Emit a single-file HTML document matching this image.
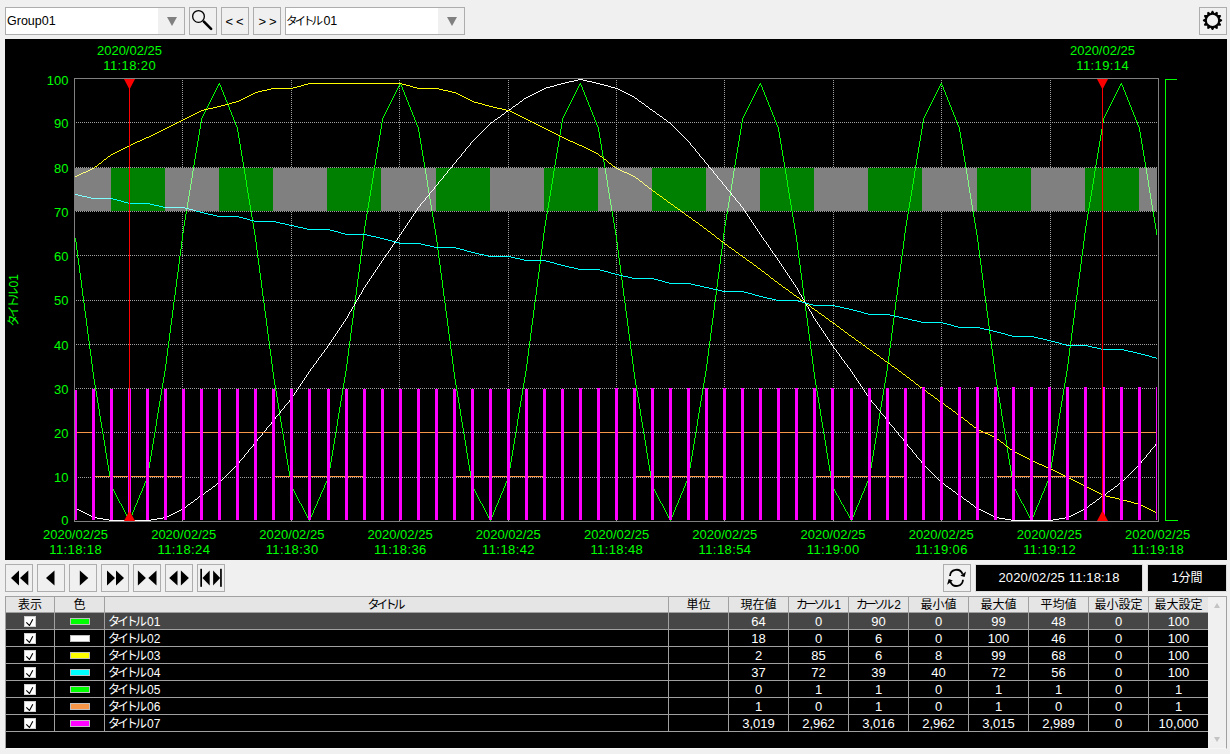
<!DOCTYPE html>
<html lang="ja">
<head>
<meta charset="utf-8">
<title>Trend</title>
<style>
html,body{margin:0;padding:0;}
body{width:1230px;height:754px;background:#f0f0f0;position:relative;overflow:hidden;
 font-family:"Liberation Sans","Noto Sans CJK JP",sans-serif;font-size:13px;color:#000;}
.abs{position:absolute;box-sizing:border-box;}
.btn{position:absolute;box-sizing:border-box;width:28px;height:28px;border:1px solid #adadad;background:#f0f0f0;
 display:flex;align-items:center;justify-content:center;}
.combo{position:absolute;box-sizing:border-box;height:28px;width:180px;border:1px solid #adadad;background:#fff;top:7px;}
.combo .txt{position:absolute;left:1px;top:0;line-height:26px;font-size:12.5px;white-space:nowrap;}
.combo .dd{position:absolute;right:0;top:0;width:26px;height:26px;background:#f0f0f0;}
.combo .dd:after{content:"";position:absolute;left:8.5px;top:9px;border-left:5.2px solid transparent;border-right:5.2px solid transparent;border-top:9px solid #808080;}
.jp{font-size:12px;letter-spacing:-3px;margin-right:3px;}
.th .jp{letter-spacing:-3.3px;margin-right:3.3px;}
.jpc{font-size:11.5px;letter-spacing:-3px;margin-right:3.4px;margin-left:-1px;}
.dg{font-size:12px;}
#chart{position:absolute;left:5px;top:39px;}
.blk{position:absolute;box-sizing:border-box;background:#000;color:#fff;height:28px;top:564px;text-align:center;line-height:26px;font-size:13px;border:1px solid #dcdcdc;}
#tbl{position:absolute;left:5px;top:596px;width:1222px;height:153px;background:#000;box-sizing:border-box;border:1px solid #a0a0a0;border-bottom-color:#f6f6f6;overflow:hidden;}
.tr{position:relative;height:17px;display:flex;}
.tr.th{height:16px;}
.c{box-sizing:border-box;height:17px;border-right:1px solid #a0a0a0;border-bottom:1px solid #a0a0a0;color:#fff;text-align:center;line-height:18px;font-size:13px;white-space:nowrap;overflow:hidden;flex:none;}
.th .c{background:#e5e5e5;color:#000;height:16px;line-height:17px;font-size:12px;}
.sel .c{background:#464646;}
.c0{width:49px;}
.c1{width:50px;}
.c2{width:564px;text-align:left;padding-left:3px;}
.th .c2{text-align:center;padding-left:0;}
.c3,.c4,.c5,.c6,.c7,.c8,.c9,.c10,.c11{width:60px;}
.cb{display:inline-block;box-sizing:border-box;width:12px;height:11px;background:#fff;border:1px solid #d0d0d0;vertical-align:top;margin-top:3px;position:relative;}
.cb svg{position:absolute;left:0;top:0;}
.sw{display:inline-block;box-sizing:border-box;width:20px;height:7px;border:1px solid #c0c0c0;vertical-align:top;margin-top:5px;}
#sb{position:absolute;right:0;top:0;width:18px;height:151px;background:#f0f0f0;}
#sb .up{position:absolute;left:5.5px;top:6px;border-left:3.5px solid transparent;border-right:3.5px solid transparent;border-bottom:5px solid #c3c3c3;}
#sb .dn{position:absolute;left:5.5px;bottom:6px;border-left:3.5px solid transparent;border-right:3.5px solid transparent;border-top:5px solid #c3c3c3;}
</style>
</head>
<body>
<div class="combo" style="left:5px"><span class="txt">Group01</span><span class="dd"></span></div>
<div class="btn" style="left:189px;top:7px"><svg width="26" height="26" viewBox="0 0 26 26"><circle cx="8.5" cy="8.45" r="5.85" fill="none" stroke="#000" stroke-width="1.3"/><line x1="13.9" y1="13.7" x2="21.1" y2="20.9" stroke="#000" stroke-width="2.6" stroke-linecap="round"/></svg></div>
<div class="btn" style="left:221px;top:7px;letter-spacing:3px;justify-content:flex-start;padding-left:3.5px">&lt;&lt;</div>
<div class="btn" style="left:253px;top:7px;letter-spacing:3px;justify-content:flex-start;padding-left:4.5px">&gt;&gt;</div>
<div class="combo" style="left:285px"><span class="txt"><span class="jpc">タイトル</span>01</span><span class="dd"></span></div>
<div class="btn" style="left:1199px;top:7px"><svg width="26" height="26" viewBox="0 0 26 26"><path d="M10.56 5.16 L11.91 2.82 L13.09 2.82 L14.44 5.16 L16.78 3.81 L17.80 4.39 L17.80 7.10 L20.51 7.10 L21.09 8.12 L19.74 10.46 L22.08 11.81 L22.08 12.99 L19.74 14.34 L21.09 16.68 L20.51 17.70 L17.80 17.70 L17.80 20.41 L16.78 20.99 L14.44 19.64 L13.09 21.98 L11.91 21.98 L10.56 19.64 L8.22 20.99 L7.20 20.41 L7.20 17.70 L4.49 17.70 L3.91 16.68 L5.26 14.34 L2.92 12.99 L2.92 11.81 L5.26 10.46 L3.91 8.12 L4.49 7.10 L7.20 7.10 L7.20 4.39 L8.22 3.81 Z M18.10 12.40 A5.6 5.6 0 1 0 6.90 12.40 A5.6 5.6 0 1 0 18.10 12.40 Z" fill="#000" fill-rule="evenodd"/></svg></div>
<svg id="chart" width="1222" height="521" viewBox="5 39 1222 521" shape-rendering="crispEdges">
<rect x="5" y="39" width="1222" height="521" fill="#000"/>
<line x1="76" y1="477.5" x2="1158" y2="477.5" stroke="#a0a0a0" stroke-width="1" stroke-dasharray="1 1"/>
<line x1="76" y1="432.5" x2="1158" y2="432.5" stroke="#a0a0a0" stroke-width="1" stroke-dasharray="1 1"/>
<line x1="76" y1="388.5" x2="1158" y2="388.5" stroke="#a0a0a0" stroke-width="1" stroke-dasharray="1 1"/>
<line x1="76" y1="344.5" x2="1158" y2="344.5" stroke="#a0a0a0" stroke-width="1" stroke-dasharray="1 1"/>
<line x1="76" y1="300.5" x2="1158" y2="300.5" stroke="#a0a0a0" stroke-width="1" stroke-dasharray="1 1"/>
<line x1="76" y1="255.5" x2="1158" y2="255.5" stroke="#a0a0a0" stroke-width="1" stroke-dasharray="1 1"/>
<line x1="76" y1="211.5" x2="1158" y2="211.5" stroke="#a0a0a0" stroke-width="1" stroke-dasharray="1 1"/>
<line x1="76" y1="167.5" x2="1158" y2="167.5" stroke="#a0a0a0" stroke-width="1" stroke-dasharray="1 1"/>
<line x1="76" y1="122.5" x2="1158" y2="122.5" stroke="#a0a0a0" stroke-width="1" stroke-dasharray="1 1"/>
<line x1="182.5" y1="80" x2="182.5" y2="521" stroke="#a0a0a0" stroke-width="1" stroke-dasharray="1 1"/>
<line x1="291.5" y1="80" x2="291.5" y2="521" stroke="#a0a0a0" stroke-width="1" stroke-dasharray="1 1"/>
<line x1="399.5" y1="80" x2="399.5" y2="521" stroke="#a0a0a0" stroke-width="1" stroke-dasharray="1 1"/>
<line x1="508.5" y1="80" x2="508.5" y2="521" stroke="#a0a0a0" stroke-width="1" stroke-dasharray="1 1"/>
<line x1="616.5" y1="80" x2="616.5" y2="521" stroke="#a0a0a0" stroke-width="1" stroke-dasharray="1 1"/>
<line x1="724.5" y1="80" x2="724.5" y2="521" stroke="#a0a0a0" stroke-width="1" stroke-dasharray="1 1"/>
<line x1="833.5" y1="80" x2="833.5" y2="521" stroke="#a0a0a0" stroke-width="1" stroke-dasharray="1 1"/>
<line x1="941.5" y1="80" x2="941.5" y2="521" stroke="#a0a0a0" stroke-width="1" stroke-dasharray="1 1"/>
<line x1="1050.5" y1="80" x2="1050.5" y2="521" stroke="#a0a0a0" stroke-width="1" stroke-dasharray="1 1"/>
<g clip-path="url(#cp)">
<path d="M75.5 238v4M76.5 242v8M77.5 250v8M78.5 258v7M79.5 265v8M80.5 273v7M81.5 280v8M82.5 288v8M83.5 296v7M84.5 303v8M85.5 311v7M86.5 318v8M87.5 326v8M88.5 334v7M89.5 341v8M90.5 349v7M91.5 356v8M92.5 364v8M93.5 372v7M94.5 379v6M95.5 385v6M96.5 391v6M97.5 397v6M98.5 403v6M99.5 409v7M100.5 416v6M101.5 422v6M102.5 428v6M103.5 434v6M104.5 440v6M105.5 446v7M106.5 453v6M107.5 459v6M108.5 465v6M109.5 471v6M110.5 477v6M111.5 483v4M112.5 487v2M113.5 489v2M114.5 491v2M115.5 493v2M116.5 495v2M117.5 497v2M118.5 499v2M119.5 501v2M120 503.5h1M121.5 504v2M122.5 506v2M123.5 508v2M124.5 510v2M125.5 512v2M126.5 514v2M127.5 516v2M128.5 518v2M128 519.5h2M129.5 519v2M130.5 517v2M131.5 515v2M132.5 512v3M133.5 510v2M134.5 507v3M135.5 505v2M136.5 503v2M137.5 500v3M138.5 498v2M139.5 495v3M140.5 493v2M141.5 491v2M142.5 488v3M143.5 486v2M144.5 483v3M145.5 481v2M146.5 479v2M147.5 474v5M148.5 468v6M149.5 462v6M150.5 456v6M151.5 450v6M152.5 444v6M153.5 438v6M154.5 432v6M155.5 426v6M156.5 419v7M157.5 413v6M158.5 407v6M159.5 401v6M160.5 395v6M161.5 389v6M162.5 383v6M163.5 377v6M164.5 371v6M165.5 364v7M166.5 356v8M167.5 348v8M168.5 341v7M169.5 333v8M170.5 325v8M171.5 318v7M172.5 310v8M173.5 302v8M174.5 295v7M175.5 287v8M176.5 279v8M177.5 272v7M178.5 264v8M179.5 256v8M180.5 249v7M181.5 241v8M182.5 233v8M183.5 226v7M184.5 220v6M185.5 214v6M186.5 208v6M187.5 202v6M188.5 196v6M189.5 190v6M190.5 184v6M191.5 178v6M192.5 171v7M193.5 165v6M194.5 159v6M195.5 153v6M196.5 147v6M197.5 141v6M198.5 135v6M199.5 129v6M200.5 123v6M201.5 118v5M202.5 116v2M203.5 114v2M204.5 112v2M205.5 110v2M206.5 108v2M207.5 106v2M208.5 104v2M209.5 102v2M210.5 100v2M211.5 98v2M212.5 96v2M213.5 94v2M214.5 92v2M215.5 90v2M216.5 88v2M217.5 86v2M218 84.5h2M218.5 84v2M219.5 83v2M220.5 85v2M221.5 87v3M222.5 90v2M223.5 92v3M224.5 95v2M225.5 97v3M226.5 100v2M227.5 102v3M228.5 105v2M229.5 107v3M230.5 110v2M231.5 112v3M232.5 115v2M233.5 117v3M234.5 120v2M235.5 122v3M236.5 125v2M237.5 127v5M238.5 132v6M239.5 138v6M240.5 144v6M241.5 150v6M242.5 156v6M243.5 162v6M244.5 168v6M245.5 174v6M246.5 180v7M247.5 187v6M248.5 193v6M249.5 199v6M250.5 205v6M251.5 211v6M252.5 217v6M253.5 223v6M254.5 229v6M255.5 235v7M256.5 242v8M257.5 250v8M258.5 258v7M259.5 265v8M260.5 273v7M261.5 280v8M262.5 288v8M263.5 296v7M264.5 303v8M265.5 311v7M266.5 318v8M267.5 326v8M268.5 334v7M269.5 341v8M270.5 349v7M271.5 356v8M272.5 364v8M273.5 372v7M274.5 379v6M275.5 385v6M276.5 391v6M277.5 397v6M278.5 403v6M279.5 409v7M280.5 416v6M281.5 422v6M282.5 428v6M283.5 434v6M284.5 440v6M285.5 446v7M286.5 453v6M287.5 459v6M288.5 465v6M289.5 471v6M290.5 477v6M291.5 483v4M292.5 487v2M293.5 489v2M294.5 491v2M295.5 493v2M296.5 495v2M297.5 497v2M298.5 499v2M299.5 501v2M300 503.5h1M301.5 504v2M302.5 506v2M303.5 508v2M304.5 510v2M305.5 512v2M306.5 514v2M307.5 516v2M308.5 518v2M308 519.5h2M309.5 519v2M310.5 517v2M311.5 515v2M312.5 513v2M313.5 510v3M314.5 508v2M315.5 506v2M316.5 504v2M317.5 501v3M318.5 499v2M319.5 497v2M320.5 494v3M321.5 492v2M322.5 490v2M323.5 488v2M324.5 485v3M325.5 483v2M326.5 481v2M327.5 479v2M328.5 474v5M329.5 468v6M330.5 462v6M331.5 456v6M332.5 450v6M333.5 444v6M334.5 438v6M335.5 432v6M336.5 426v6M337.5 419v7M338.5 413v6M339.5 407v6M340.5 401v6M341.5 395v6M342.5 389v6M343.5 383v6M344.5 377v6M345.5 371v6M346.5 364v7M347.5 356v8M348.5 348v8M349.5 341v7M350.5 333v8M351.5 325v8M352.5 318v7M353.5 310v8M354.5 302v8M355.5 295v7M356.5 287v8M357.5 279v8M358.5 272v7M359.5 264v8M360.5 256v8M361.5 249v7M362.5 241v8M363.5 233v8M364.5 226v7M365.5 220v6M366.5 214v6M367.5 208v6M368.5 202v6M369.5 196v6M370.5 190v6M371.5 184v6M372.5 178v6M373.5 171v7M374.5 165v6M375.5 159v6M376.5 153v6M377.5 147v6M378.5 141v6M379.5 135v6M380.5 129v6M381.5 123v6M382.5 118v5M383.5 116v2M384.5 114v2M385.5 112v2M386.5 110v2M387.5 108v2M388.5 106v2M389.5 104v2M390.5 102v2M391.5 100v2M392.5 98v2M393.5 96v2M394.5 94v2M395.5 92v2M396.5 90v2M397.5 88v2M398.5 86v2M399 84.5h2M399.5 84v2M400.5 83v2M401.5 85v2M402.5 87v3M403.5 90v2M404.5 92v3M405.5 95v2M406.5 97v3M407.5 100v2M408.5 102v3M409.5 105v2M410.5 107v3M411.5 110v2M412.5 112v3M413.5 115v2M414.5 117v3M415.5 120v2M416.5 122v3M417.5 125v2M418.5 127v5M419.5 132v6M420.5 138v6M421.5 144v6M422.5 150v6M423.5 156v6M424.5 162v6M425.5 168v6M426.5 174v6M427.5 180v7M428.5 187v6M429.5 193v6M430.5 199v6M431.5 205v6M432.5 211v6M433.5 217v6M434.5 223v6M435.5 229v6M436.5 235v7M437.5 242v8M438.5 250v8M439.5 258v7M440.5 265v8M441.5 273v7M442.5 280v8M443.5 288v8M444.5 296v7M445.5 303v8M446.5 311v7M447.5 318v8M448.5 326v8M449.5 334v7M450.5 341v8M451.5 349v7M452.5 356v8M453.5 364v8M454.5 372v7M455.5 379v6M456.5 385v6M457.5 391v6M458.5 397v6M459.5 403v6M460.5 409v7M461.5 416v6M462.5 422v6M463.5 428v6M464.5 434v6M465.5 440v6M466.5 446v7M467.5 453v6M468.5 459v6M469.5 465v6M470.5 471v6M471.5 477v6M472.5 483v4M473.5 487v2M474.5 489v2M475.5 491v2M476.5 493v2M477.5 495v2M478.5 497v2M479.5 499v2M480.5 501v2M481 503.5h1M482.5 504v2M483.5 506v2M484.5 508v2M485.5 510v2M486.5 512v2M487.5 514v2M488.5 516v2M489.5 518v2M489 519.5h2M490.5 519v2M491.5 517v2M492.5 515v2M493.5 512v3M494.5 510v2M495.5 507v3M496.5 505v2M497.5 503v2M498.5 500v3M499.5 498v2M500.5 495v3M501.5 493v2M502.5 491v2M503.5 488v3M504.5 486v2M505.5 483v3M506.5 481v2M507.5 479v2M508.5 474v5M509.5 468v6M510.5 462v6M511.5 456v6M512.5 450v6M513.5 444v6M514.5 438v6M515.5 432v6M516.5 426v6M517.5 419v7M518.5 413v6M519.5 407v6M520.5 401v6M521.5 395v6M522.5 389v6M523.5 383v6M524.5 377v6M525.5 371v6M526.5 364v7M527.5 356v8M528.5 348v8M529.5 341v7M530.5 333v8M531.5 325v8M532.5 318v7M533.5 310v8M534.5 302v8M535.5 295v7M536.5 287v8M537.5 279v8M538.5 272v7M539.5 264v8M540.5 256v8M541.5 249v7M542.5 241v8M543.5 233v8M544.5 226v7M545.5 220v6M546.5 214v6M547.5 208v6M548.5 202v6M549.5 196v6M550.5 190v6M551.5 184v6M552.5 178v6M553.5 171v7M554.5 165v6M555.5 159v6M556.5 153v6M557.5 147v6M558.5 141v6M559.5 135v6M560.5 129v6M561.5 123v6M562.5 118v5M563.5 116v2M564.5 114v2M565.5 112v2M566.5 110v2M567.5 108v2M568.5 106v2M569.5 104v2M570.5 102v2M571.5 100v2M572.5 98v2M573.5 96v2M574.5 94v2M575.5 92v2M576.5 90v2M577.5 88v2M578.5 86v2M579 84.5h2M579.5 84v2M580.5 83v2M581.5 85v2M582.5 87v3M583.5 90v2M584.5 92v3M585.5 95v2M586.5 97v3M587.5 100v2M588.5 102v3M589.5 105v2M590.5 107v3M591.5 110v2M592.5 112v3M593.5 115v2M594.5 117v3M595.5 120v2M596.5 122v3M597.5 125v2M598.5 127v5M599.5 132v6M600.5 138v6M601.5 144v6M602.5 150v6M603.5 156v6M604.5 162v6M605.5 168v6M606.5 174v6M607.5 180v7M608.5 187v6M609.5 193v6M610.5 199v6M611.5 205v6M612.5 211v6M613.5 217v6M614.5 223v6M615.5 229v6M616.5 235v7M617.5 242v8M618.5 250v8M619.5 258v7M620.5 265v8M621.5 273v7M622.5 280v8M623.5 288v8M624.5 296v7M625.5 303v8M626.5 311v7M627.5 318v8M628.5 326v8M629.5 334v7M630.5 341v8M631.5 349v7M632.5 356v8M633.5 364v8M634.5 372v7M635.5 379v6M636.5 385v6M637.5 391v6M638.5 397v6M639.5 403v6M640.5 409v7M641.5 416v6M642.5 422v6M643.5 428v6M644.5 434v6M645.5 440v6M646.5 446v7M647.5 453v6M648.5 459v6M649.5 465v6M650.5 471v6M651.5 477v6M652.5 483v4M653.5 487v2M654.5 489v2M655.5 491v2M656.5 493v2M657.5 495v2M658.5 497v2M659.5 499v2M660.5 501v2M661 503.5h1M662.5 504v2M663.5 506v2M664.5 508v2M665.5 510v2M666.5 512v2M667.5 514v2M668.5 516v2M669.5 518v2M669 519.5h2M670.5 519v2M671.5 517v2M672.5 515v2M673.5 512v3M674.5 510v2M675.5 507v3M676.5 505v2M677.5 503v2M678.5 500v3M679.5 498v2M680.5 495v3M681.5 493v2M682.5 491v2M683.5 488v3M684.5 486v2M685.5 483v3M686.5 481v2M687.5 479v2M688.5 474v5M689.5 468v6M690.5 462v6M691.5 456v6M692.5 450v6M693.5 444v6M694.5 438v6M695.5 432v6M696.5 426v6M697.5 419v7M698.5 413v6M699.5 407v6M700.5 401v6M701.5 395v6M702.5 389v6M703.5 383v6M704.5 377v6M705.5 371v6M706.5 364v7M707.5 356v8M708.5 348v8M709.5 341v7M710.5 333v8M711.5 325v8M712.5 318v7M713.5 310v8M714.5 302v8M715.5 295v7M716.5 287v8M717.5 279v8M718.5 272v7M719.5 264v8M720.5 256v8M721.5 249v7M722.5 241v8M723.5 233v8M724.5 226v7M725.5 220v6M726.5 214v6M727.5 208v6M728.5 202v6M729.5 196v6M730.5 190v6M731.5 184v6M732.5 178v6M733.5 171v7M734.5 165v6M735.5 159v6M736.5 153v6M737.5 147v6M738.5 141v6M739.5 135v6M740.5 129v6M741.5 123v6M742.5 118v5M743.5 116v2M744.5 114v2M745.5 112v2M746.5 110v2M747.5 108v2M748.5 106v2M749.5 104v2M750.5 102v2M751.5 100v2M752.5 98v2M753.5 96v2M754.5 94v2M755.5 92v2M756.5 90v2M757.5 88v2M758.5 86v2M759 84.5h2M759.5 84v2M760.5 83v2M761.5 85v2M762.5 87v3M763.5 90v2M764.5 92v3M765.5 95v2M766.5 97v3M767.5 100v2M768.5 102v3M769.5 105v2M770.5 107v3M771.5 110v2M772.5 112v3M773.5 115v2M774.5 117v3M775.5 120v2M776.5 122v3M777.5 125v2M778.5 127v5M779.5 132v6M780.5 138v6M781.5 144v6M782.5 150v6M783.5 156v6M784.5 162v6M785.5 168v6M786.5 174v6M787.5 180v7M788.5 187v6M789.5 193v6M790.5 199v6M791.5 205v6M792.5 211v6M793.5 217v6M794.5 223v6M795.5 229v6M796.5 235v7M797.5 242v8M798.5 250v8M799.5 258v7M800.5 265v8M801.5 273v7M802.5 280v8M803.5 288v8M804.5 296v7M805.5 303v8M806.5 311v7M807.5 318v8M808.5 326v8M809.5 334v7M810.5 341v8M811.5 349v7M812.5 356v8M813.5 364v8M814.5 372v7M815.5 379v6M816.5 385v6M817.5 391v6M818.5 397v6M819.5 403v6M820.5 409v7M821.5 416v6M822.5 422v6M823.5 428v6M824.5 434v6M825.5 440v6M826.5 446v7M827.5 453v6M828.5 459v6M829.5 465v6M830.5 471v6M831.5 477v6M832.5 483v4M833.5 487v2M834.5 489v2M835.5 491v2M836.5 493v2M837 495.5h1M838.5 496v2M839.5 498v2M840.5 500v2M841.5 502v2M842 504.5h1M843.5 505v2M844.5 507v2M845.5 509v2M846 511.5h1M847.5 512v2M848.5 514v2M849.5 516v2M850.5 518v2M850 519.5h2M851.5 519v2M852.5 517v2M853.5 515v2M854.5 512v3M855.5 510v2M856.5 507v3M857.5 505v2M858.5 503v2M859.5 500v3M860.5 498v2M861.5 495v3M862.5 493v2M863.5 491v2M864.5 488v3M865.5 486v2M866.5 483v3M867.5 481v2M868.5 479v2M869.5 474v5M870.5 468v6M871.5 462v6M872.5 456v6M873.5 450v6M874.5 444v6M875.5 438v6M876.5 432v6M877.5 426v6M878.5 419v7M879.5 413v6M880.5 407v6M881.5 401v6M882.5 395v6M883.5 389v6M884.5 383v6M885.5 377v6M886.5 371v6M887.5 364v7M888.5 356v8M889.5 348v8M890.5 341v7M891.5 333v8M892.5 325v8M893.5 318v7M894.5 310v8M895.5 302v8M896.5 295v7M897.5 287v8M898.5 279v8M899.5 272v7M900.5 264v8M901.5 256v8M902.5 249v7M903.5 241v8M904.5 233v8M905.5 226v7M906.5 220v6M907.5 214v6M908.5 208v6M909.5 202v6M910.5 196v6M911.5 190v6M912.5 184v6M913.5 178v6M914.5 171v7M915.5 165v6M916.5 159v6M917.5 153v6M918.5 147v6M919.5 141v6M920.5 135v6M921.5 129v6M922.5 123v6M923.5 118v5M924.5 116v2M925.5 114v2M926.5 112v2M927.5 110v2M928.5 108v2M929.5 106v2M930.5 104v2M931.5 102v2M932.5 100v2M933.5 98v2M934.5 96v2M935.5 94v2M936.5 92v2M937.5 90v2M938.5 88v2M939.5 86v2M940 84.5h2M940.5 84v2M941.5 83v2M942.5 85v2M943.5 87v3M944.5 90v2M945.5 92v3M946.5 95v2M947.5 97v3M948.5 100v2M949.5 102v3M950.5 105v2M951.5 107v3M952.5 110v2M953.5 112v3M954.5 115v2M955.5 117v3M956.5 120v2M957.5 122v3M958.5 125v2M959.5 127v5M960.5 132v6M961.5 138v6M962.5 144v6M963.5 150v6M964.5 156v6M965.5 162v6M966.5 168v6M967.5 174v6M968.5 180v7M969.5 187v6M970.5 193v6M971.5 199v6M972.5 205v6M973.5 211v6M974.5 217v6M975.5 223v6M976.5 229v6M977.5 235v7M978.5 242v8M979.5 250v8M980.5 258v7M981.5 265v8M982.5 273v7M983.5 280v8M984.5 288v8M985.5 296v7M986.5 303v8M987.5 311v7M988.5 318v8M989.5 326v8M990.5 334v7M991.5 341v8M992.5 349v7M993.5 356v8M994.5 364v8M995.5 372v7M996.5 379v6M997.5 385v6M998.5 391v6M999.5 397v6M1000.5 403v6M1001.5 409v7M1002.5 416v6M1003.5 422v6M1004.5 428v6M1005.5 434v6M1006.5 440v6M1007.5 446v7M1008.5 453v6M1009.5 459v6M1010.5 465v6M1011.5 471v6M1012.5 477v6M1013.5 483v4M1014.5 487v2M1015.5 489v2M1016.5 491v2M1017.5 493v2M1018.5 495v2M1019.5 497v2M1020.5 499v2M1021.5 501v2M1022 503.5h1M1023.5 504v2M1024.5 506v2M1025.5 508v2M1026.5 510v2M1027.5 512v2M1028.5 514v2M1029.5 516v2M1030.5 518v2M1030 519.5h2M1031.5 519v2M1032.5 517v2M1033.5 515v2M1034.5 512v3M1035.5 510v2M1036.5 507v3M1037.5 505v2M1038.5 503v2M1039.5 500v3M1040.5 498v2M1041.5 495v3M1042.5 493v2M1043.5 491v2M1044.5 488v3M1045.5 486v2M1046.5 483v3M1047.5 481v2M1048.5 479v2M1049.5 474v5M1050.5 468v6M1051.5 462v6M1052.5 456v6M1053.5 450v6M1054.5 444v6M1055.5 438v6M1056.5 432v6M1057.5 426v6M1058.5 419v7M1059.5 413v6M1060.5 407v6M1061.5 401v6M1062.5 395v6M1063.5 389v6M1064.5 383v6M1065.5 377v6M1066.5 371v6M1067.5 364v7M1068.5 356v8M1069.5 348v8M1070.5 341v7M1071.5 333v8M1072.5 325v8M1073.5 318v7M1074.5 310v8M1075.5 302v8M1076.5 295v7M1077.5 287v8M1078.5 279v8M1079.5 272v7M1080.5 264v8M1081.5 256v8M1082.5 249v7M1083.5 241v8M1084.5 233v8M1085.5 226v7M1086.5 220v6M1087.5 214v6M1088.5 208v6M1089.5 202v6M1090.5 196v6M1091.5 190v6M1092.5 184v6M1093.5 178v6M1094.5 171v7M1095.5 165v6M1096.5 159v6M1097.5 153v6M1098.5 147v6M1099.5 141v6M1100.5 135v6M1101.5 129v6M1102.5 123v6M1103.5 118v5M1104.5 116v2M1105.5 114v2M1106.5 112v2M1107.5 110v2M1108.5 108v2M1109.5 106v2M1110.5 104v2M1111.5 102v2M1112.5 100v2M1113.5 98v2M1114.5 96v2M1115.5 94v2M1116.5 92v2M1117.5 90v2M1118.5 88v2M1119.5 86v2M1120 84.5h2M1120.5 84v2M1121.5 83v2M1122.5 85v2M1123.5 87v3M1124.5 90v2M1125.5 92v3M1126.5 95v2M1127.5 97v3M1128.5 100v2M1129.5 102v3M1130.5 105v2M1131.5 107v3M1132.5 110v2M1133.5 112v3M1134.5 115v2M1135.5 117v3M1136.5 120v2M1137.5 122v3M1138.5 125v2M1139.5 127v5M1140.5 132v6M1141.5 138v6M1142.5 144v6M1143.5 150v6M1144.5 156v6M1145.5 162v6M1146.5 168v6M1147.5 174v6M1148.5 180v7M1149.5 187v6M1150.5 193v6M1151.5 199v6M1152.5 205v6M1153.5 211v6M1154.5 217v6M1155.5 223v6M1156.5 229v6" fill="none" stroke="#00ff00" stroke-width="1" />
<path d="M75 508.5h2M77 509.5h2M79 510.5h2M81 511.5h2M83 512.5h2M85 513.5h2M87 514.5h2M89 515.5h2M91 516.5h2M93 517.5h4M97 518.5h6M103 519.5h6M109 520.5h42M151 519.5h6M157 518.5h6M163 517.5h4M167 516.5h2M169 515.5h2M171 514.5h2M173 513.5h2M175 512.5h2M177 511.5h2M179 510.5h2M181 509.5h2M183 508.5h1M184 507.5h2M186 506.5h1M187 505.5h1M188 504.5h2M190 503.5h1M191 502.5h2M193 501.5h1M194 500.5h1M195 499.5h2M197 498.5h1M198 497.5h1M199 496.5h2M201 495.5h1M202 494.5h2M204 493.5h1M205 492.5h1M206 491.5h2M208 490.5h1M209 489.5h2M211 488.5h1M212 487.5h1M213 486.5h2M215 485.5h1M216 484.5h1M217 483.5h2M219 482.5h1M220 481.5h1M221 480.5h1M222 479.5h1M223 478.5h1M224 477.5h1M225 476.5h1M226 475.5h1M227 474.5h1M228 473.5h1M229 472.5h1M230 471.5h1M231 470.5h1M232 469.5h1M233 468.5h1M234 467.5h1M235 466.5h1M236 465.5h1M237 464.5h1M238 463.5h1M239.5 461v2M240 460.5h1M241 459.5h1M242 458.5h1M243 457.5h1M244.5 455v2M245 454.5h1M246 453.5h1M247 452.5h1M248.5 450v2M249 449.5h1M250 448.5h1M251 447.5h1M252 446.5h1M253.5 444v2M254 443.5h1M255 442.5h1M256 441.5h1M257.5 439v2M258 438.5h1M259 437.5h1M260 436.5h1M261 435.5h1M262.5 433v2M263 432.5h1M264 431.5h1M265 430.5h1M266.5 428v2M267 427.5h1M268 426.5h1M269 425.5h1M270 424.5h1M271.5 422v2M272 421.5h1M273 420.5h1M274 419.5h1M275.5 417v2M276 416.5h1M277 415.5h1M278 414.5h1M279 413.5h1M280.5 411v2M281 410.5h1M282 409.5h1M283 408.5h1M284.5 406v2M285 405.5h1M286 404.5h1M287 403.5h1M288 402.5h1M289.5 400v2M290 399.5h1M291 398.5h1M292.5 396v2M293 395.5h1M294.5 393v2M295 392.5h1M296.5 390v2M297 389.5h1M298.5 387v2M299 386.5h1M300.5 384v2M301 383.5h1M302.5 381v2M303 380.5h1M304.5 378v2M305 377.5h1M306.5 375v2M307 374.5h1M308.5 372v2M309 371.5h1M310.5 369v2M311 368.5h1M312 367.5h1M313.5 365v2M314 364.5h1M315 363.5h1M316.5 361v2M317 360.5h1M318.5 358v2M319 357.5h1M320 356.5h1M321.5 354v2M322 353.5h1M323 352.5h1M324.5 350v2M325 349.5h1M326 348.5h1M327.5 346v2M328 345.5h1M329.5 343v2M330 342.5h1M331.5 340v2M332 339.5h1M333.5 337v2M334 336.5h1M335.5 334v2M336 333.5h1M337.5 331v2M338 330.5h1M339.5 328v2M340 327.5h1M341.5 325v2M342 324.5h1M343.5 322v2M344 321.5h1M345.5 319v2M346 318.5h1M347.5 316v2M348.5 314v2M349.5 312v2M350 311.5h1M351.5 309v2M352.5 307v2M353 306.5h1M354.5 304v2M355.5 302v2M356.5 300v2M357 299.5h1M358.5 297v2M359.5 295v2M360 294.5h1M361.5 292v2M362.5 290v2M363.5 288v2M364 287.5h1M365.5 285v2M366 284.5h1M367.5 282v2M368 281.5h1M369.5 279v2M370 278.5h1M371.5 276v2M372 275.5h1M373.5 273v2M374 272.5h1M375.5 270v2M376 269.5h1M377.5 267v2M378 266.5h1M379.5 264v2M380 263.5h1M381.5 261v2M382 260.5h1M383.5 258v2M384 257.5h1M385.5 255v2M386 254.5h1M387 253.5h1M388.5 251v2M389 250.5h1M390.5 248v2M391 247.5h1M392.5 245v2M393 244.5h1M394.5 242v2M395 241.5h1M396 240.5h1M397.5 238v2M398 237.5h1M399.5 235v2M400 234.5h1M401.5 232v2M402 231.5h1M403.5 229v2M404 228.5h1M405.5 226v2M406 225.5h1M407.5 223v2M408 222.5h1M409.5 220v2M410 219.5h1M411.5 217v2M412 216.5h1M413.5 214v2M414 213.5h1M415.5 211v2M416 210.5h1M417.5 208v2M418 207.5h1M419 206.5h1M420.5 204v2M421 203.5h1M422 202.5h1M423 201.5h1M424 200.5h1M425.5 198v2M426 197.5h1M427 196.5h1M428 195.5h1M429.5 193v2M430 192.5h1M431 191.5h1M432 190.5h1M433 189.5h1M434.5 187v2M435 186.5h1M436 185.5h1M437 184.5h1M438.5 182v2M439 181.5h1M440 180.5h1M441 179.5h1M442 178.5h1M443.5 176v2M444 175.5h1M445 174.5h1M446 173.5h1M447.5 171v2M448 170.5h1M449 169.5h1M450 168.5h1M451 167.5h1M452.5 165v2M453 164.5h1M454 163.5h1M455 162.5h1M456.5 160v2M457 159.5h1M458 158.5h1M459 157.5h1M460 156.5h1M461.5 154v2M462 153.5h1M463 152.5h1M464 151.5h1M465.5 149v2M466 148.5h1M467 147.5h1M468 146.5h1M469 145.5h1M470.5 143v2M471 142.5h1M472 141.5h1M473 140.5h1M474 139.5h1M475 138.5h1M476 137.5h1M477 136.5h1M478 135.5h1M479 134.5h1M480 133.5h1M481 132.5h1M482 131.5h1M483 130.5h1M484 129.5h1M485 128.5h1M486 127.5h1M487 126.5h1M488 125.5h1M489 124.5h1M490 123.5h1M491 122.5h2M493 121.5h1M494 120.5h1M495 119.5h2M497 118.5h1M498 117.5h2M500 116.5h1M501 115.5h1M502 114.5h2M504 113.5h1M505 112.5h1M506 111.5h2M508 110.5h1M509 109.5h2M511 108.5h1M512 107.5h1M513 106.5h2M515 105.5h1M516 104.5h2M518 103.5h1M519 102.5h1M520 101.5h2M522 100.5h1M523 99.5h1M524 98.5h2M526 97.5h2M528 96.5h2M530 95.5h2M532 94.5h2M534 93.5h2M536 92.5h2M538 91.5h2M540 90.5h2M542 89.5h2M544 88.5h2M546 87.5h4M550 86.5h4M554 85.5h3M557 84.5h4M561 83.5h4M565 82.5h4M569 81.5h5M574 80.5h4M578 79.5h5M583 80.5h4M587 81.5h5M592 82.5h4M596 83.5h4M600 84.5h4M604 85.5h4M608 86.5h3M611 87.5h4M615 88.5h3M618 89.5h2M620 90.5h2M622 91.5h2M624 92.5h2M626 93.5h2M628 94.5h2M630 95.5h2M632 96.5h2M634 97.5h1M635 98.5h2M637 99.5h1M638 100.5h1M639 101.5h2M641 102.5h1M642 103.5h2M644 104.5h1M645 105.5h1M646 106.5h2M648 107.5h1M649 108.5h1M650 109.5h2M652 110.5h1M653 111.5h2M655 112.5h1M656 113.5h1M657 114.5h2M659 115.5h1M660 116.5h2M662 117.5h1M663 118.5h1M664 119.5h2M666 120.5h1M667 121.5h1M668 122.5h2M670 123.5h1M671 124.5h1M672 125.5h1M673 126.5h1M674 127.5h1M675 128.5h1M676 129.5h1M677 130.5h1M678 131.5h1M679 132.5h1M680 133.5h1M681 134.5h1M682 135.5h1M683 136.5h1M684 137.5h1M685 138.5h1M686 139.5h1M687 140.5h1M688 141.5h1M689 142.5h1M690.5 143v2M691 145.5h1M692 146.5h1M693 147.5h1M694 148.5h1M695.5 149v2M696 151.5h1M697 152.5h1M698 153.5h1M699.5 154v2M700 156.5h1M701 157.5h1M702 158.5h1M703 159.5h1M704.5 160v2M705 162.5h1M706 163.5h1M707 164.5h1M708.5 165v2M709 167.5h1M710 168.5h1M711 169.5h1M712 170.5h1M713.5 171v2M714 173.5h1M715 174.5h1M716 175.5h1M717.5 176v2M718 178.5h1M719 179.5h1M720 180.5h1M721 181.5h1M722.5 182v2M723 184.5h1M724 185.5h1M725 186.5h1M726.5 187v2M727 189.5h1M728 190.5h1M729 191.5h1M730 192.5h1M731.5 193v2M732 195.5h1M733 196.5h1M734 197.5h1M735.5 198v2M736 200.5h1M737 201.5h1M738 202.5h1M739 203.5h1M740.5 204v2M741 206.5h1M742 207.5h1M743.5 208v2M744 210.5h1M745.5 211v2M746 213.5h1M747.5 214v2M748 216.5h1M749.5 217v2M750 219.5h1M751.5 220v2M752 222.5h1M753.5 223v2M754 225.5h1M755.5 226v2M756 228.5h1M757.5 229v2M758 231.5h1M759.5 232v2M760 234.5h1M761.5 235v2M762 237.5h1M763.5 238v2M764 240.5h1M765 241.5h1M766.5 242v2M767 244.5h1M768.5 245v2M769 247.5h1M770.5 248v2M771 250.5h1M772.5 251v2M773 253.5h1M774 254.5h1M775.5 255v2M776 257.5h1M777.5 258v2M778 260.5h1M779.5 261v2M780 263.5h1M781.5 264v2M782 266.5h1M783.5 267v2M784 269.5h1M785.5 270v2M786 272.5h1M787.5 273v2M788 275.5h1M789.5 276v2M790 278.5h1M791.5 279v2M792 281.5h1M793.5 282v2M794 284.5h1M795.5 285v2M796 287.5h1M797.5 288v2M798.5 290v2M799.5 292v2M800 294.5h1M801.5 295v2M802.5 297v2M803 299.5h1M804.5 300v2M805.5 302v2M806.5 304v2M807 306.5h1M808.5 307v2M809.5 309v2M810 311.5h1M811.5 312v2M812.5 314v2M813.5 316v2M814 318.5h1M815.5 319v2M816 321.5h1M817.5 322v2M818 324.5h1M819.5 325v2M820 327.5h1M821.5 328v2M822 330.5h1M823.5 331v2M824 333.5h1M825.5 334v2M826 336.5h1M827.5 337v2M828 339.5h1M829.5 340v2M830 342.5h1M831.5 343v2M832 345.5h1M833.5 346v2M834 348.5h1M835 349.5h1M836.5 350v2M837 352.5h1M838 353.5h1M839.5 354v2M840 356.5h1M841.5 357v2M842 359.5h1M843 360.5h1M844.5 361v2M845 363.5h1M846 364.5h1M847.5 365v2M848 367.5h1M849 368.5h1M850.5 369v2M851 371.5h1M852.5 372v2M853 374.5h1M854.5 375v2M855 377.5h1M856.5 378v2M857 380.5h1M858.5 381v2M859 383.5h1M860.5 384v2M861 386.5h1M862.5 387v2M863 389.5h1M864.5 390v2M865 392.5h1M866.5 393v2M867 395.5h1M868.5 396v2M869 398.5h1M870 399.5h1M871.5 400v2M872 402.5h1M873 403.5h1M874 404.5h1M875 405.5h1M876.5 406v2M877 408.5h1M878 409.5h1M879 410.5h1M880.5 411v2M881 413.5h1M882 414.5h1M883 415.5h1M884 416.5h1M885.5 417v2M886 419.5h1M887 420.5h1M888 421.5h1M889.5 422v2M890 424.5h1M891 425.5h1M892 426.5h1M893 427.5h1M894.5 428v2M895 430.5h1M896 431.5h1M897 432.5h1M898.5 433v2M899 435.5h1M900 436.5h1M901 437.5h1M902 438.5h1M903.5 439v2M904 441.5h1M905 442.5h1M906 443.5h1M907.5 444v2M908 446.5h1M909 447.5h1M910 448.5h1M911 449.5h1M912.5 450v2M913 452.5h1M914 453.5h1M915 454.5h1M916.5 455v2M917 457.5h1M918 458.5h1M919 459.5h1M920 460.5h1M921.5 461v2M922 463.5h1M923 464.5h1M924 465.5h1M925 466.5h1M926 467.5h1M927 468.5h1M928 469.5h1M929 470.5h1M930 471.5h1M931 472.5h1M932 473.5h1M933 474.5h1M934 475.5h1M935 476.5h1M936 477.5h1M937 478.5h1M938 479.5h1M939 480.5h1M940 481.5h1M941 482.5h1M942 483.5h2M944 484.5h1M945 485.5h1M946 486.5h2M948 487.5h1M949 488.5h2M951 489.5h1M952 490.5h1M953 491.5h2M955 492.5h1M956 493.5h1M957 494.5h2M959 495.5h1M960 496.5h2M962 497.5h1M963 498.5h1M964 499.5h2M966 500.5h1M967 501.5h2M969 502.5h1M970 503.5h1M971 504.5h2M973 505.5h1M974 506.5h1M975 507.5h2M977 508.5h2M979 509.5h2M981 510.5h2M983 511.5h2M985 512.5h2M987 513.5h2M989 514.5h2M991 515.5h2M993 516.5h2M995 517.5h4M999 518.5h6M1005 519.5h6M1011 520.5h42M1053 519.5h6M1059 518.5h6M1065 517.5h4M1069 516.5h2M1071 515.5h2M1073 514.5h2M1075 513.5h2M1077 512.5h2M1079 511.5h2M1081 510.5h2M1083 509.5h2M1085 508.5h1M1086 507.5h2M1088 506.5h1M1089 505.5h1M1090 504.5h2M1092 503.5h1M1093 502.5h2M1095 501.5h1M1096 500.5h1M1097 499.5h2M1099 498.5h1M1100 497.5h1M1101 496.5h2M1103 495.5h1M1104 494.5h2M1106 493.5h1M1107 492.5h1M1108 491.5h2M1110 490.5h1M1111 489.5h2M1113 488.5h1M1114 487.5h1M1115 486.5h2M1117 485.5h1M1118 484.5h1M1119 483.5h2M1121 482.5h1M1122 481.5h1M1123 480.5h1M1124 479.5h1M1125 478.5h1M1126 477.5h1M1127 476.5h1M1128 475.5h1M1129 474.5h1M1130 473.5h1M1131 472.5h1M1132 471.5h1M1133 470.5h1M1134 469.5h1M1135 468.5h1M1136 467.5h1M1137 466.5h1M1138 465.5h1M1139 464.5h1M1140 463.5h1M1141.5 461v2M1142 460.5h1M1143 459.5h1M1144 458.5h1M1145 457.5h1M1146.5 455v2M1147 454.5h1M1148 453.5h1M1149 452.5h1M1150.5 450v2M1151 449.5h1M1152 448.5h1M1153 447.5h1M1154 446.5h1M1155.5 444v2M1156 443.5h1" fill="none" stroke="#ffffff" stroke-width="1" />
<path d="M75 176.5h2M77 175.5h2M79 174.5h2M81 173.5h2M83 172.5h3M86 171.5h2M88 170.5h2M90 169.5h2M92 168.5h2M94 167.5h1M95 166.5h2M97 165.5h1M98 164.5h1M99 163.5h2M101 162.5h1M102 161.5h1M103 160.5h1M104 159.5h2M106 158.5h1M107 157.5h1M108 156.5h2M110 155.5h1M111 154.5h2M113 153.5h2M115 152.5h2M117 151.5h2M119 150.5h2M121 149.5h2M123 148.5h2M125 147.5h2M127 146.5h2M129 145.5h2M131 144.5h2M133 143.5h2M135 142.5h2M137 141.5h3M140 140.5h2M142 139.5h2M144 138.5h2M146 137.5h3M149 136.5h2M151 135.5h2M153 134.5h2M155 133.5h2M157 132.5h2M159 131.5h2M161 130.5h2M163 129.5h2M165 128.5h2M167 127.5h2M169 126.5h2M171 125.5h2M173 124.5h2M175 123.5h2M177 122.5h2M179 121.5h2M181 120.5h2M183 119.5h2M185 118.5h2M187 117.5h2M189 116.5h2M191 115.5h2M193 114.5h2M195 113.5h2M197 112.5h2M199 111.5h2M201 110.5h3M204 109.5h4M208 108.5h5M213 107.5h4M217 106.5h4M221 105.5h4M225 104.5h4M229 103.5h3M232 102.5h4M236 101.5h3M239 100.5h2M241 99.5h2M243 98.5h2M245 97.5h2M247 96.5h2M249 95.5h2M251 94.5h2M253 93.5h2M255 92.5h3M258 91.5h4M262 90.5h5M267 89.5h4M271 88.5h22M293 87.5h4M297 86.5h4M301 85.5h3M304 84.5h4M308 83.5h94M402 84.5h4M406 85.5h4M410 86.5h3M413 87.5h4M417 88.5h22M439 89.5h4M443 90.5h5M448 91.5h4M452 92.5h4M456 93.5h2M458 94.5h2M460 95.5h2M462 96.5h2M464 97.5h2M466 98.5h2M468 99.5h2M470 100.5h2M472 101.5h2M474 102.5h4M478 103.5h4M482 104.5h3M485 105.5h4M489 106.5h4M493 107.5h4M497 108.5h5M502 109.5h4M506 110.5h4M510 111.5h2M512 112.5h2M514 113.5h2M516 114.5h2M518 115.5h2M520 116.5h2M522 117.5h2M524 118.5h2M526 119.5h2M528 120.5h2M530 121.5h2M532 122.5h2M534 123.5h2M536 124.5h2M538 125.5h2M540 126.5h2M542 127.5h2M544 128.5h2M546 129.5h2M548 130.5h2M550 131.5h2M552 132.5h2M554 133.5h2M556 134.5h2M558 135.5h2M560 136.5h2M562 137.5h2M564 138.5h2M566 139.5h2M568 140.5h2M570 141.5h3M573 142.5h2M575 143.5h2M577 144.5h2M579 145.5h3M582 146.5h2M584 147.5h2M586 148.5h2M588 149.5h2M590 150.5h2M592 151.5h2M594 152.5h2M596 153.5h2M598 154.5h1M599 155.5h1M600 156.5h2M602 157.5h1M603 158.5h1M604 159.5h2M606 160.5h1M607 161.5h1M608 162.5h1M609 163.5h2M611 164.5h1M612 165.5h1M613 166.5h2M615 167.5h1M616 168.5h2M618 169.5h2M620 170.5h2M622 171.5h2M624 172.5h3M627 173.5h2M629 174.5h2M631 175.5h2M633 176.5h2M635 177.5h1M636 178.5h2M638 179.5h1M639 180.5h1M640 181.5h2M642 182.5h1M643 183.5h1M644 184.5h1M645 185.5h2M647 186.5h1M648 187.5h1M649 188.5h2M651 189.5h1M652 190.5h1M653 191.5h2M655 192.5h1M656 193.5h1M657 194.5h2M659 195.5h1M660 196.5h2M662 197.5h1M663 198.5h1M664 199.5h2M666 200.5h1M667 201.5h1M668 202.5h2M670 203.5h1M671 204.5h2M673 205.5h1M674 206.5h1M675 207.5h2M677 208.5h1M678 209.5h2M680 210.5h1M681 211.5h1M682 212.5h2M684 213.5h1M685 214.5h1M686 215.5h2M688 216.5h1M689 217.5h2M691 218.5h1M692 219.5h1M693 220.5h2M695 221.5h1M696 222.5h2M698 223.5h1M699 224.5h1M700 225.5h2M702 226.5h1M703 227.5h1M704 228.5h2M706 229.5h1M707 230.5h1M708 231.5h2M710 232.5h1M711 233.5h1M712 234.5h2M714 235.5h1M715 236.5h1M716 237.5h1M717 238.5h2M719 239.5h1M720 240.5h1M721 241.5h2M723 242.5h1M724 243.5h1M725 244.5h2M727 245.5h1M728 246.5h1M729 247.5h2M731 248.5h1M732 249.5h2M734 250.5h1M735 251.5h1M736 252.5h2M738 253.5h1M739 254.5h1M740 255.5h2M742 256.5h1M743 257.5h2M745 258.5h1M746 259.5h1M747 260.5h2M749 261.5h1M750 262.5h2M752 263.5h1M753 264.5h1M754 265.5h2M756 266.5h1M757 267.5h1M758 268.5h2M760 269.5h1M761 270.5h1M762 271.5h2M764 272.5h1M765 273.5h1M766 274.5h2M768 275.5h1M769 276.5h1M770 277.5h1M771 278.5h2M773 279.5h1M774 280.5h1M775 281.5h2M777 282.5h1M778 283.5h1M779 284.5h2M781 285.5h1M782 286.5h1M783 287.5h2M785 288.5h1M786 289.5h2M788 290.5h1M789 291.5h1M790 292.5h2M792 293.5h1M793 294.5h1M794 295.5h2M796 296.5h1M797 297.5h2M799 298.5h1M800 299.5h1M801 300.5h2M803 301.5h1M804 302.5h2M806 303.5h1M807 304.5h1M808 305.5h2M810 306.5h1M811 307.5h1M812 308.5h2M814 309.5h1M815 310.5h2M817 311.5h1M818 312.5h1M819 313.5h2M821 314.5h1M822 315.5h2M824 316.5h1M825 317.5h1M826 318.5h2M828 319.5h1M829 320.5h1M830 321.5h2M832 322.5h1M833 323.5h2M835 324.5h1M836 325.5h1M837 326.5h2M839 327.5h1M840 328.5h1M841 329.5h2M843 330.5h1M844 331.5h1M845 332.5h2M847 333.5h1M848 334.5h1M849 335.5h2M851 336.5h1M852 337.5h2M854 338.5h1M855 339.5h1M856 340.5h2M858 341.5h1M859 342.5h2M861 343.5h1M862 344.5h1M863 345.5h2M865 346.5h1M866 347.5h1M867 348.5h2M869 349.5h1M870 350.5h2M872 351.5h1M873 352.5h1M874 353.5h2M876 354.5h1M877 355.5h2M879 356.5h1M880 357.5h1M881 358.5h2M883 359.5h1M884 360.5h1M885 361.5h2M887 362.5h1M888 363.5h2M890 364.5h1M891 365.5h1M892 366.5h2M894 367.5h1M895 368.5h2M897 369.5h1M898 370.5h1M899 371.5h2M901 372.5h1M902 373.5h1M903 374.5h2M905 375.5h1M906 376.5h1M907 377.5h2M909 378.5h1M910 379.5h1M911 380.5h2M913 381.5h1M914 382.5h1M915 383.5h1M916 384.5h2M918 385.5h1M919 386.5h1M920 387.5h2M922 388.5h1M923 389.5h1M924 390.5h2M926 391.5h1M927 392.5h1M928 393.5h2M930 394.5h1M931 395.5h2M933 396.5h1M934 397.5h1M935 398.5h2M937 399.5h1M938 400.5h1M939 401.5h2M941 402.5h1M942 403.5h2M944 404.5h1M945 405.5h1M946 406.5h2M948 407.5h1M949 408.5h2M951 409.5h1M952 410.5h1M953 411.5h2M955 412.5h1M956 413.5h1M957 414.5h2M959 415.5h1M960 416.5h1M961 417.5h2M963 418.5h1M964 419.5h1M965 420.5h2M967 421.5h1M968 422.5h1M969 423.5h1M970 424.5h2M972 425.5h1M973 426.5h1M974 427.5h2M976 428.5h1M977 429.5h2M979 430.5h2M981 431.5h2M983 432.5h2M985 433.5h3M988 434.5h2M990 435.5h2M992 436.5h2M994 437.5h2M996 438.5h1M997 439.5h2M999 440.5h1M1000 441.5h1M1001 442.5h2M1003 443.5h1M1004 444.5h1M1005 445.5h1M1006 446.5h2M1008 447.5h1M1009 448.5h1M1010 449.5h2M1012 450.5h1M1013 451.5h2M1015 452.5h2M1017 453.5h2M1019 454.5h2M1021 455.5h2M1023 456.5h2M1025 457.5h2M1027 458.5h2M1029 459.5h2M1031 460.5h2M1033 461.5h2M1035 462.5h2M1037 463.5h2M1039 464.5h3M1042 465.5h2M1044 466.5h2M1046 467.5h2M1048 468.5h3M1051 469.5h2M1053 470.5h2M1055 471.5h2M1057 472.5h2M1059 473.5h2M1061 474.5h2M1063 475.5h2M1065 476.5h2M1067 477.5h2M1069 478.5h2M1071 479.5h2M1073 480.5h2M1075 481.5h2M1077 482.5h2M1079 483.5h2M1081 484.5h2M1083 485.5h2M1085 486.5h2M1087 487.5h2M1089 488.5h2M1091 489.5h2M1093 490.5h2M1095 491.5h2M1097 492.5h2M1099 493.5h2M1101 494.5h2M1103 495.5h3M1106 496.5h4M1110 497.5h5M1115 498.5h4M1119 499.5h4M1123 500.5h4M1127 501.5h4M1131 502.5h3M1134 503.5h4M1138 504.5h3M1141 505.5h2M1143 506.5h2M1145 507.5h2M1147 508.5h2M1149 509.5h2M1151 510.5h2M1153 511.5h2M1155 512.5h2" fill="none" stroke="#ffff00" stroke-width="1" />
<path d="M75 194.5h3M78 195.5h4M82 196.5h5M87 197.5h4M91 198.5h22M113 199.5h4M117 200.5h4M121 201.5h3M124 202.5h4M128 203.5h22M150 204.5h4M154 205.5h5M159 206.5h4M163 207.5h22M185 208.5h4M189 209.5h4M193 210.5h3M196 211.5h4M200 212.5h4M204 213.5h4M208 214.5h5M213 215.5h4M217 216.5h22M239 217.5h4M243 218.5h4M247 219.5h3M250 220.5h4M254 221.5h22M276 222.5h4M280 223.5h5M285 224.5h4M289 225.5h5M294 226.5h4M298 227.5h5M303 228.5h4M307 229.5h23M330 230.5h4M334 231.5h4M338 232.5h3M341 233.5h4M345 234.5h22M367 235.5h4M371 236.5h5M376 237.5h4M380 238.5h4M384 239.5h4M388 240.5h4M392 241.5h3M395 242.5h4M399 243.5h22M421 244.5h4M425 245.5h5M430 246.5h4M434 247.5h22M456 248.5h4M460 249.5h4M464 250.5h3M467 251.5h4M471 252.5h4M475 253.5h4M479 254.5h5M484 255.5h4M488 256.5h23M511 257.5h4M515 258.5h5M520 259.5h4M524 260.5h22M546 261.5h4M550 262.5h4M554 263.5h3M557 264.5h4M561 265.5h4M565 266.5h4M569 267.5h5M574 268.5h4M578 269.5h22M600 270.5h4M604 271.5h4M608 272.5h3M611 273.5h4M615 274.5h4M619 275.5h4M623 276.5h5M628 277.5h4M632 278.5h22M654 279.5h4M658 280.5h4M662 281.5h3M665 282.5h4M669 283.5h22M691 284.5h4M695 285.5h5M700 286.5h4M704 287.5h5M709 288.5h4M713 289.5h5M718 290.5h4M722 291.5h22M744 292.5h4M748 293.5h4M752 294.5h3M755 295.5h4M759 296.5h4M763 297.5h4M767 298.5h5M772 299.5h4M776 300.5h22M798 301.5h4M802 302.5h4M806 303.5h3M809 304.5h4M813 305.5h22M835 306.5h5M840 307.5h4M844 308.5h5M849 309.5h4M853 310.5h4M857 311.5h4M861 312.5h3M864 313.5h4M868 314.5h22M890 315.5h4M894 316.5h5M899 317.5h4M903 318.5h5M908 319.5h4M912 320.5h5M917 321.5h4M921 322.5h22M943 323.5h4M947 324.5h4M951 325.5h3M954 326.5h4M958 327.5h22M980 328.5h4M984 329.5h5M989 330.5h4M993 331.5h4M997 332.5h4M1001 333.5h4M1005 334.5h3M1008 335.5h4M1012 336.5h22M1034 337.5h4M1038 338.5h5M1043 339.5h4M1047 340.5h4M1051 341.5h4M1055 342.5h4M1059 343.5h3M1062 344.5h4M1066 345.5h22M1088 346.5h4M1092 347.5h5M1097 348.5h4M1101 349.5h23M1124 350.5h4M1128 351.5h5M1133 352.5h4M1137 353.5h4M1141 354.5h4M1145 355.5h4M1149 356.5h3M1152 357.5h4M1156 358.5h1" fill="none" stroke="#00ffff" stroke-width="1" />
<g style="mix-blend-mode:lighten"><rect x="75" y="168" width="36" height="43" fill="#808080"/><rect x="111" y="168" width="54" height="43" fill="#008000"/><rect x="165" y="168" width="54" height="43" fill="#808080"/><rect x="219" y="168" width="54" height="43" fill="#008000"/><rect x="273" y="168" width="54" height="43" fill="#808080"/><rect x="327" y="168" width="54" height="43" fill="#008000"/><rect x="381" y="168" width="55" height="43" fill="#808080"/><rect x="436" y="168" width="54" height="43" fill="#008000"/><rect x="490" y="168" width="54" height="43" fill="#808080"/><rect x="544" y="168" width="54" height="43" fill="#008000"/><rect x="598" y="168" width="54" height="43" fill="#808080"/><rect x="652" y="168" width="54" height="43" fill="#008000"/><rect x="706" y="168" width="54" height="43" fill="#808080"/><rect x="760" y="168" width="54" height="43" fill="#008000"/><rect x="814" y="168" width="54" height="43" fill="#808080"/><rect x="868" y="168" width="54" height="43" fill="#008000"/><rect x="922" y="168" width="55" height="43" fill="#808080"/><rect x="977" y="168" width="54" height="43" fill="#008000"/><rect x="1031" y="168" width="54" height="43" fill="#808080"/><rect x="1085" y="168" width="54" height="43" fill="#008000"/><rect x="1139" y="168" width="19" height="43" fill="#808080"/></g>
<polyline points="75.5,432.5 93.5,432.5 93.5,476.5 111.5,476.5 111.5,476.5 129.5,476.5 129.5,476.5 147.5,476.5 147.5,476.5 165.5,476.5 165.5,476.5 183.5,476.5 183.5,432.5 201.5,432.5 201.5,432.5 219.5,432.5 219.5,432.5 237.5,432.5 237.5,432.5 255.5,432.5 255.5,432.5 273.5,432.5 273.5,476.5 291.5,476.5 291.5,476.5 309.5,476.5 309.5,476.5 328.5,476.5 328.5,476.5 346.5,476.5 346.5,476.5 364.5,476.5 364.5,432.5 382.5,432.5 382.5,432.5 400.5,432.5 400.5,432.5 418.5,432.5 418.5,432.5 436.5,432.5 436.5,432.5 454.5,432.5 454.5,476.5 472.5,476.5 472.5,476.5 490.5,476.5 490.5,476.5 508.5,476.5 508.5,476.5 526.5,476.5 526.5,476.5 544.5,476.5 544.5,432.5 562.5,432.5 562.5,432.5 580.5,432.5 580.5,432.5 598.5,432.5 598.5,432.5 616.5,432.5 616.5,432.5 634.5,432.5 634.5,476.5 652.5,476.5 652.5,476.5 670.5,476.5 670.5,476.5 688.5,476.5 688.5,476.5 706.5,476.5 706.5,476.5 724.5,476.5 724.5,432.5 742.5,432.5 742.5,432.5 760.5,432.5 760.5,432.5 778.5,432.5 778.5,432.5 796.5,432.5 796.5,432.5 814.5,432.5 814.5,476.5 832.5,476.5 832.5,476.5 851.5,476.5 851.5,476.5 869.5,476.5 869.5,476.5 887.5,476.5 887.5,476.5 905.5,476.5 905.5,432.5 923.5,432.5 923.5,432.5 941.5,432.5 941.5,432.5 959.5,432.5 959.5,432.5 977.5,432.5 977.5,432.5 995.5,432.5 995.5,476.5 1013.5,476.5 1013.5,476.5 1031.5,476.5 1031.5,476.5 1049.5,476.5 1049.5,476.5 1067.5,476.5 1067.5,476.5 1085.5,476.5 1085.5,432.5 1103.5,432.5 1103.5,432.5 1121.5,432.5 1121.5,432.5 1139.5,432.5 1139.5,432.5 1157.5,432.5" fill="none" stroke="#f79646" stroke-width="1"/>
<rect x="74" y="390" width="3" height="130" fill="#ff00ff"/>
<rect x="92" y="389" width="3" height="131" fill="#ff00ff"/>
<rect x="110" y="389" width="3" height="131" fill="#ff00ff"/>
<rect x="128" y="389" width="3" height="131" fill="#ff00ff"/>
<rect x="146" y="389" width="3" height="131" fill="#ff00ff"/>
<rect x="164" y="389" width="3" height="131" fill="#ff00ff"/>
<rect x="182" y="389" width="3" height="131" fill="#ff00ff"/>
<rect x="200" y="389" width="3" height="131" fill="#ff00ff"/>
<rect x="218" y="389" width="3" height="131" fill="#ff00ff"/>
<rect x="236" y="389" width="3" height="131" fill="#ff00ff"/>
<rect x="254" y="389" width="3" height="131" fill="#ff00ff"/>
<rect x="272" y="389" width="3" height="131" fill="#ff00ff"/>
<rect x="290" y="389" width="3" height="131" fill="#ff00ff"/>
<rect x="308" y="389" width="3" height="131" fill="#ff00ff"/>
<rect x="327" y="389" width="3" height="131" fill="#ff00ff"/>
<rect x="345" y="389" width="3" height="131" fill="#ff00ff"/>
<rect x="363" y="389" width="3" height="131" fill="#ff00ff"/>
<rect x="381" y="389" width="3" height="131" fill="#ff00ff"/>
<rect x="399" y="389" width="3" height="131" fill="#ff00ff"/>
<rect x="417" y="389" width="3" height="131" fill="#ff00ff"/>
<rect x="435" y="389" width="3" height="131" fill="#ff00ff"/>
<rect x="453" y="389" width="3" height="131" fill="#ff00ff"/>
<rect x="471" y="389" width="3" height="131" fill="#ff00ff"/>
<rect x="489" y="389" width="3" height="131" fill="#ff00ff"/>
<rect x="507" y="389" width="3" height="131" fill="#ff00ff"/>
<rect x="525" y="389" width="3" height="131" fill="#ff00ff"/>
<rect x="543" y="389" width="3" height="131" fill="#ff00ff"/>
<rect x="561" y="389" width="3" height="131" fill="#ff00ff"/>
<rect x="579" y="388" width="3" height="132" fill="#ff00ff"/>
<rect x="597" y="388" width="3" height="132" fill="#ff00ff"/>
<rect x="615" y="388" width="3" height="132" fill="#ff00ff"/>
<rect x="633" y="388" width="3" height="132" fill="#ff00ff"/>
<rect x="651" y="388" width="3" height="132" fill="#ff00ff"/>
<rect x="669" y="388" width="3" height="132" fill="#ff00ff"/>
<rect x="687" y="388" width="3" height="132" fill="#ff00ff"/>
<rect x="705" y="388" width="3" height="132" fill="#ff00ff"/>
<rect x="723" y="388" width="3" height="132" fill="#ff00ff"/>
<rect x="741" y="388" width="3" height="132" fill="#ff00ff"/>
<rect x="759" y="388" width="3" height="132" fill="#ff00ff"/>
<rect x="777" y="388" width="3" height="132" fill="#ff00ff"/>
<rect x="795" y="388" width="3" height="132" fill="#ff00ff"/>
<rect x="813" y="388" width="3" height="132" fill="#ff00ff"/>
<rect x="831" y="388" width="3" height="132" fill="#ff00ff"/>
<rect x="850" y="388" width="3" height="132" fill="#ff00ff"/>
<rect x="868" y="388" width="3" height="132" fill="#ff00ff"/>
<rect x="886" y="388" width="3" height="132" fill="#ff00ff"/>
<rect x="904" y="388" width="3" height="132" fill="#ff00ff"/>
<rect x="922" y="387" width="3" height="133" fill="#ff00ff"/>
<rect x="940" y="387" width="3" height="133" fill="#ff00ff"/>
<rect x="958" y="387" width="3" height="133" fill="#ff00ff"/>
<rect x="976" y="387" width="3" height="133" fill="#ff00ff"/>
<rect x="994" y="387" width="3" height="133" fill="#ff00ff"/>
<rect x="1012" y="387" width="3" height="133" fill="#ff00ff"/>
<rect x="1030" y="387" width="3" height="133" fill="#ff00ff"/>
<rect x="1048" y="387" width="3" height="133" fill="#ff00ff"/>
<rect x="1066" y="387" width="3" height="133" fill="#ff00ff"/>
<rect x="1084" y="387" width="3" height="133" fill="#ff00ff"/>
<rect x="1102" y="387" width="3" height="133" fill="#ff00ff"/>
<rect x="1120" y="387" width="3" height="133" fill="#ff00ff"/>
<rect x="1138" y="387" width="3" height="133" fill="#ff00ff"/>
<rect x="1156" y="387" width="3" height="133" fill="#ff00ff"/>
</g>
<defs><clipPath id="cp"><rect x="75" y="79" width="1082" height="442"/></clipPath></defs>
<rect x="74.5" y="78.5" width="1084" height="443" fill="none" stroke="#808080" stroke-width="1"/>
<line x1="129.5" y1="79" x2="129.5" y2="521" stroke="#ff0000" stroke-width="1"/>
<polygon points="124,79 135,79 129.5,89.5" fill="#ff0000" shape-rendering="auto"/>
<polygon points="124,521 135,521 129.5,510.5" fill="#ff0000" shape-rendering="auto"/>
<line x1="1102.5" y1="79" x2="1102.5" y2="521" stroke="#ff0000" stroke-width="1"/>
<polygon points="1097,79 1108,79 1102.5,89.5" fill="#ff0000" shape-rendering="auto"/>
<polygon points="1097,521 1108,521 1102.5,510.5" fill="#ff0000" shape-rendering="auto"/>
<polyline points="1177,79.5 1165.5,79.5 1165.5,520.5 1178,520.5" fill="none" stroke="#00ff00" stroke-width="1"/>
<g font-family="'Liberation Sans', 'Noto Sans CJK JP', sans-serif" font-size="13" fill="#00ff00" shape-rendering="auto">
<text x="68.5" y="525.3" text-anchor="end">0</text>
<text x="68.5" y="482.3" text-anchor="end">10</text>
<text x="68.5" y="438.1" text-anchor="end">20</text>
<text x="68.5" y="394.1" text-anchor="end">30</text>
<text x="68.5" y="350.1" text-anchor="end">40</text>
<text x="68.5" y="305.2" text-anchor="end">50</text>
<text x="68.5" y="261.1" text-anchor="end">60</text>
<text x="68.5" y="217.1" text-anchor="end">70</text>
<text x="68.5" y="173.1" text-anchor="end">80</text>
<text x="68.5" y="128.1" text-anchor="end">90</text>
<text x="68.5" y="85.3" text-anchor="end">100</text>
<text x="75.5" y="539" text-anchor="middle">2020/02/25</text>
<text x="75.7" y="554" text-anchor="middle" letter-spacing="0.4">11:18:18</text>
<text x="183.7" y="539" text-anchor="middle">2020/02/25</text>
<text x="183.9" y="554" text-anchor="middle" letter-spacing="0.4">11:18:24</text>
<text x="291.9" y="539" text-anchor="middle">2020/02/25</text>
<text x="292.1" y="554" text-anchor="middle" letter-spacing="0.4">11:18:30</text>
<text x="400.1" y="539" text-anchor="middle">2020/02/25</text>
<text x="400.3" y="554" text-anchor="middle" letter-spacing="0.4">11:18:36</text>
<text x="508.3" y="539" text-anchor="middle">2020/02/25</text>
<text x="508.5" y="554" text-anchor="middle" letter-spacing="0.4">11:18:42</text>
<text x="616.6" y="539" text-anchor="middle">2020/02/25</text>
<text x="616.8" y="554" text-anchor="middle" letter-spacing="0.4">11:18:48</text>
<text x="724.8" y="539" text-anchor="middle">2020/02/25</text>
<text x="725.0" y="554" text-anchor="middle" letter-spacing="0.4">11:18:54</text>
<text x="833.0" y="539" text-anchor="middle">2020/02/25</text>
<text x="833.2" y="554" text-anchor="middle" letter-spacing="0.4">11:19:00</text>
<text x="941.2" y="539" text-anchor="middle">2020/02/25</text>
<text x="941.4" y="554" text-anchor="middle" letter-spacing="0.4">11:19:06</text>
<text x="1049.4" y="539" text-anchor="middle">2020/02/25</text>
<text x="1049.6" y="554" text-anchor="middle" letter-spacing="0.4">11:19:12</text>
<text x="1157.6" y="539" text-anchor="middle">2020/02/25</text>
<text x="1157.8" y="554" text-anchor="middle" letter-spacing="0.4">11:19:18</text>
<text x="129.5" y="55" text-anchor="middle">2020/02/25</text>
<text x="129.7" y="70" text-anchor="middle" letter-spacing="0.4">11:18:20</text>
<text x="1102.5" y="55" text-anchor="middle">2020/02/25</text>
<text x="1102.7" y="70" text-anchor="middle" letter-spacing="0.4">11:19:14</text>
<text transform="translate(18,300.3) rotate(-90)" text-anchor="middle" font-size="12" letter-spacing="-3">タイトル<tspan letter-spacing="0" dx="3" font-size="12">01</tspan></text>
</g>
</svg>
<div class="btn" style="left:5px;top:564px"><svg width="26" height="26" viewBox="0 0 26 26" fill="#000"><polygon points="5,13.0 13,5.5 13,20.5"/><polygon points="14,13.0 22.3,5.5 22.3,20.5"/></svg></div>
<div class="btn" style="left:37px;top:564px"><svg width="26" height="26" viewBox="0 0 26 26" fill="#000"><polygon points="8,13.0 16.5,5.5 16.5,20.5"/></svg></div>
<div class="btn" style="left:69px;top:564px"><svg width="26" height="26" viewBox="0 0 26 26" fill="#000"><polygon points="18.3,13.0 9.8,5.5 9.8,20.5"/></svg></div>
<div class="btn" style="left:101px;top:564px"><svg width="26" height="26" viewBox="0 0 26 26" fill="#000"><polygon points="13,13.0 5,5.5 5,20.5"/><polygon points="22,13.0 14,5.5 14,20.5"/></svg></div>
<div class="btn" style="left:133px;top:564px"><svg width="26" height="26" viewBox="0 0 26 26" fill="#000"><polygon points="11.9,13.0 3.9000000000000004,5.5 3.9000000000000004,20.5"/><polygon points="14.3,13.0 22.5,5.5 22.5,20.5"/></svg></div>
<div class="btn" style="left:165px;top:564px"><svg width="26" height="26" viewBox="0 0 26 26" fill="#000"><polygon points="3.2,13.0 11.5,5.5 11.5,20.5"/><polygon points="22.9,13.0 14.9,5.5 14.9,20.5"/></svg></div>
<div class="btn" style="left:197px;top:564px"><svg width="26" height="26" viewBox="0 0 26 26" fill="#000"><rect x="2.3" y="3.8" width="1.7" height="18"/><polygon points="4.5,13.0 11.7,5.5 11.7,20.5"/><polygon points="22.2,13.0 15.100000000000001,5.5 15.100000000000001,20.5"/><rect x="22.1" y="3.8" width="1.7" height="18"/></svg></div>
<div class="btn" style="left:943px;top:564px"><svg width="26" height="26" viewBox="0 0 26 26" fill="#000"><path d="M5.99 11.08 A6.5 6.5 0 0 1 18.51 8.87" fill="none" stroke="#000" stroke-width="1.8"/><path d="M18.98 14.71 A6.5 6.5 0 0 1 6.46 16.92" fill="none" stroke="#000" stroke-width="1.8"/><polygon points="16.36,10.77 22.03,6.53 20.60,12.10"/><polygon points="3.10,19.79 4.69,13.95 8.77,15.55"/></svg></div>
<div class="blk" style="left:975px;width:168px;letter-spacing:0.15px">2020/02/25 11:18:18</div>
<div class="blk" style="left:1147px;width:80px">1<span style="font-size:12px">分間</span></div>
<div id="tbl">
<div class="tr th"><div class="c c0">表示</div><div class="c c1">色</div><div class="c c2"><span class="jp">タイトル</span></div><div class="c c3">単位</div><div class="c c4">現在値</div><div class="c c5"><span class="jp">カーソル</span>1</div><div class="c c6"><span class="jp">カーソル</span>2</div><div class="c c7">最小値</div><div class="c c8">最大値</div><div class="c c9">平均値</div><div class="c c10">最小設定</div><div class="c c11">最大設定</div></div>
<div class="tr sel"><div class="c c0"><span class="cb"><svg width="10" height="9" viewBox="0 0 10 9"><path d="M1.3 5.3 L4.5 8.5 L7.8 2.2" fill="none" stroke="#000" stroke-width="1.1"/></svg></span></div><div class="c c1"><span class="sw" style="background:#00ff00"></span></div><div class="c c2"><span class="jp">タイトル</span><span class="dg">01</span></div><div class="c c3"></div><div class="c c4">64</div><div class="c c5">0</div><div class="c c6">90</div><div class="c c7">0</div><div class="c c8">99</div><div class="c c9">48</div><div class="c c10">0</div><div class="c c11">100</div></div>
<div class="tr"><div class="c c0"><span class="cb"><svg width="10" height="9" viewBox="0 0 10 9"><path d="M1.3 5.3 L4.5 8.5 L7.8 2.2" fill="none" stroke="#000" stroke-width="1.1"/></svg></span></div><div class="c c1"><span class="sw" style="background:#ffffff"></span></div><div class="c c2"><span class="jp">タイトル</span><span class="dg">02</span></div><div class="c c3"></div><div class="c c4">18</div><div class="c c5">0</div><div class="c c6">6</div><div class="c c7">0</div><div class="c c8">100</div><div class="c c9">46</div><div class="c c10">0</div><div class="c c11">100</div></div>
<div class="tr"><div class="c c0"><span class="cb"><svg width="10" height="9" viewBox="0 0 10 9"><path d="M1.3 5.3 L4.5 8.5 L7.8 2.2" fill="none" stroke="#000" stroke-width="1.1"/></svg></span></div><div class="c c1"><span class="sw" style="background:#ffff00"></span></div><div class="c c2"><span class="jp">タイトル</span><span class="dg">03</span></div><div class="c c3"></div><div class="c c4">2</div><div class="c c5">85</div><div class="c c6">6</div><div class="c c7">8</div><div class="c c8">99</div><div class="c c9">68</div><div class="c c10">0</div><div class="c c11">100</div></div>
<div class="tr"><div class="c c0"><span class="cb"><svg width="10" height="9" viewBox="0 0 10 9"><path d="M1.3 5.3 L4.5 8.5 L7.8 2.2" fill="none" stroke="#000" stroke-width="1.1"/></svg></span></div><div class="c c1"><span class="sw" style="background:#00ffff"></span></div><div class="c c2"><span class="jp">タイトル</span><span class="dg">04</span></div><div class="c c3"></div><div class="c c4">37</div><div class="c c5">72</div><div class="c c6">39</div><div class="c c7">40</div><div class="c c8">72</div><div class="c c9">56</div><div class="c c10">0</div><div class="c c11">100</div></div>
<div class="tr"><div class="c c0"><span class="cb"><svg width="10" height="9" viewBox="0 0 10 9"><path d="M1.3 5.3 L4.5 8.5 L7.8 2.2" fill="none" stroke="#000" stroke-width="1.1"/></svg></span></div><div class="c c1"><span class="sw" style="background:#00ff00"></span></div><div class="c c2"><span class="jp">タイトル</span><span class="dg">05</span></div><div class="c c3"></div><div class="c c4">0</div><div class="c c5">1</div><div class="c c6">1</div><div class="c c7">0</div><div class="c c8">1</div><div class="c c9">1</div><div class="c c10">0</div><div class="c c11">1</div></div>
<div class="tr"><div class="c c0"><span class="cb"><svg width="10" height="9" viewBox="0 0 10 9"><path d="M1.3 5.3 L4.5 8.5 L7.8 2.2" fill="none" stroke="#000" stroke-width="1.1"/></svg></span></div><div class="c c1"><span class="sw" style="background:#f79646"></span></div><div class="c c2"><span class="jp">タイトル</span><span class="dg">06</span></div><div class="c c3"></div><div class="c c4">1</div><div class="c c5">0</div><div class="c c6">1</div><div class="c c7">0</div><div class="c c8">1</div><div class="c c9">0</div><div class="c c10">0</div><div class="c c11">1</div></div>
<div class="tr"><div class="c c0"><span class="cb"><svg width="10" height="9" viewBox="0 0 10 9"><path d="M1.3 5.3 L4.5 8.5 L7.8 2.2" fill="none" stroke="#000" stroke-width="1.1"/></svg></span></div><div class="c c1"><span class="sw" style="background:#ff00ff"></span></div><div class="c c2"><span class="jp">タイトル</span><span class="dg">07</span></div><div class="c c3"></div><div class="c c4">3,019</div><div class="c c5">2,962</div><div class="c c6">3,016</div><div class="c c7">2,962</div><div class="c c8">3,015</div><div class="c c9">2,989</div><div class="c c10">0</div><div class="c c11">10,000</div></div>
<div id="sb"><span class="up"></span><span class="dn"></span></div>
</div>
</body>
</html>
